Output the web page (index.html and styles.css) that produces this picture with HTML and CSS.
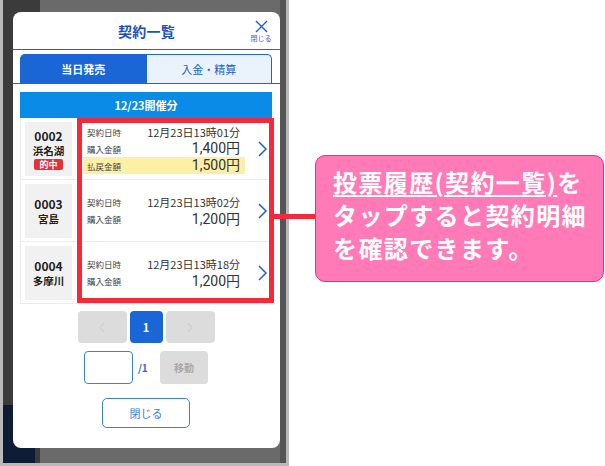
FILE: index.html
```html
<!DOCTYPE html>
<html lang="ja">
<head>
<meta charset="utf-8">
<title>契約一覧</title>
<link rel="stylesheet" href="styles.css">
</head>
<body>
<div class="stage">
  <div class="phone">
    <div class="modal">
      <header class="modal-head">
        <span class="head-spacer"></span>
        <h1 class="modal-title">契約一覧</h1>
        <div class="head-close">
          <svg class="x-icon" width="13" height="13" viewBox="0 0 13 13"><path d="M1 1L12 12M12 1L1 12" stroke="#1a5fd0" stroke-width="1.4" fill="none"/></svg>
          <span class="head-close-label">閉じる</span>
        </div>
      </header>
      <div class="tabs">
        <div class="tab tab-active">当日発売</div>
        <div class="tab tab-idle">入金・精算</div>
      </div>
      <div class="modal-body">
        <div class="date-bar">12/23開催分</div>
        <div class="list">
          <div class="row">
            <div class="venue">
              <div class="venue-num">0002</div>
              <div class="venue-name">浜名湖</div>
              <span class="badge">的中</span>
            </div>
            <div class="detail">
              <div class="line"><span class="lbl">契約日時</span><span class="val-date">12月23日13時01分</span></div>
              <div class="line"><span class="lbl">購入金額</span><span class="val-amt">1,400円</span></div>
              <div class="line line-hit"><span class="lbl">払戻金額</span><span class="val-amt">1,500円</span></div>
            </div>
            <div class="chev"><svg width="9" height="16" viewBox="0 0 9 16"><path d="M1 1L8 8L1 15" stroke="#1a5fd0" stroke-width="1.5" fill="none"/></svg></div>
          </div>
          <div class="row">
            <div class="venue">
              <div class="venue-num">0003</div>
              <div class="venue-name">宮島</div>
            </div>
            <div class="detail">
              <div class="line"><span class="lbl">契約日時</span><span class="val-date">12月23日13時02分</span></div>
              <div class="line"><span class="lbl">購入金額</span><span class="val-amt">1,200円</span></div>
            </div>
            <div class="chev"><svg width="9" height="16" viewBox="0 0 9 16"><path d="M1 1L8 8L1 15" stroke="#1a5fd0" stroke-width="1.5" fill="none"/></svg></div>
          </div>
          <div class="row">
            <div class="venue">
              <div class="venue-num">0004</div>
              <div class="venue-name">多摩川</div>
            </div>
            <div class="detail">
              <div class="line"><span class="lbl">契約日時</span><span class="val-date">12月23日13時18分</span></div>
              <div class="line"><span class="lbl">購入金額</span><span class="val-amt">1,200円</span></div>
            </div>
            <div class="chev"><svg width="9" height="16" viewBox="0 0 9 16"><path d="M1 1L8 8L1 15" stroke="#1a5fd0" stroke-width="1.5" fill="none"/></svg></div>
          </div>
          <div class="highlight"></div>
        </div>
        <div class="pager">
          <div class="pg pg-nav"><svg width="6" height="11" viewBox="0 0 6 11"><path d="M5 1L1 5.5L5 10" stroke="#c9c9c9" stroke-width="1" fill="none"/></svg></div>
          <div class="pg pg-current">1</div>
          <div class="pg pg-nav"><svg width="6" height="11" viewBox="0 0 6 11"><path d="M1 1L5 5.5L1 10" stroke="#c9c9c9" stroke-width="1" fill="none"/></svg></div>
        </div>
        <div class="jump">
          <div class="jump-input"></div>
          <span class="jump-total">/1</span>
          <div class="jump-btn">移動</div>
        </div>
        <div class="close-btn">閉じる</div>
      </div>
    </div>
  </div>
  <div class="callout">
    <p class="callout-text"><span class="callout-u">投票履歴(契約一覧)</span>を<br>タップすると契約明細<br>を確認できます。</p>
  </div>
</div>
</body>
</html>
```

FILE: styles.css
```css
* { box-sizing: border-box; }
html, body { margin: 0; padding: 0; }
body {
  width: 605px;
  height: 466px;
  overflow: hidden;
  background: #ffffff;
  font-family: "Noto Sans CJK JP", "Noto Sans", sans-serif;
  color: #333;
}
.stage {
  display: flex;
  align-items: flex-start;
  height: 466px;
}
.phone {
  width: 289px;
  height: 466px;
  flex: none;
  border: 3px solid #b9b9b9;
  border-top: 0;
  padding: 12px 6px 0 10px;
  background:
    linear-gradient(#0e1c36, #0e1c36) left bottom / 32px 58px no-repeat,
    linear-gradient(to right, #3b3b3b 0, #3b3b3b 37px, #6a6a6a 37px, #6a6a6a 277px, #555 277px);
}
.modal {
  background: #fff;
  border-radius: 8px;
  height: 436px;
  display: flex;
  flex-direction: column;
  overflow: hidden;
}
.modal-head {
  height: 38px;
  flex: none;
  display: grid;
  grid-template-columns: 1fr auto 1fr;
  align-items: center;
  border-bottom: 1px solid #1a66d6;
}
.modal-title {
  margin: 0;
  font-size: 14px;
  font-weight: 700;
  color: #1a4fbf;
  letter-spacing: 0.3px;
  padding-top: 1px;
}
.head-close {
  justify-self: end;
  margin-right: 7px;
  width: 24px;
  display: flex;
  flex-direction: column;
  align-items: center;
  padding-top: 2px;
}
.x-icon { display: block; }
.head-close-label {
  font-size: 7px;
  line-height: 9px;
  color: #2f6ad6;
  margin-top: 1px;
  white-space: nowrap;
}
.tabs {
  flex: none;
  display: flex;
  padding: 4px 8px 0 7px;
  border-bottom: 1px solid #1a66d6;
}
.tab {
  flex: 1;
  height: 29px;
  display: flex;
  align-items: center;
  justify-content: center;
  font-size: 11px;
  font-weight: 700;
  border: 1px solid #1a66d6;
  border-bottom: 0;
}
.tab-active {
  background: #1a66d6;
  color: #fff;
  border-radius: 5px 0 0 0;
}
.tab-idle {
  background: #eaf2fc;
  color: #1a5fd0;
  font-weight: 400;
  border-radius: 0 5px 0 0;
  border-left: 0;
}
.modal-body {
  flex: 1;
  padding: 8px 8px 0 7px;
  display: flex;
  flex-direction: column;
  align-items: center;
}
.date-bar {
  align-self: stretch;
  height: 26px;
  background: #0a8be8;
  color: #fff;
  font-size: 11px;
  font-weight: 700;
  display: flex;
  align-items: center;
  justify-content: center;
}
.list {
  align-self: stretch;
  position: relative;
  border: 1px solid #ebebeb;
  border-top: 0;
}
.row {
  height: 61px;
  display: flex;
  align-items: center;
}
.row + .row { border-top: 1px solid #ececec; height: 62px; }
.venue {
  align-self: stretch;
  width: 47px;
  margin: 4px 0 3px 4px;
  background: #f1f1f1;
  display: flex;
  flex-direction: column;
  align-items: center;
  justify-content: center;
  color: #222;
  font-weight: 700;
}
.venue-num { font-size: 12px; line-height: 15px; }
.venue-name { font-size: 10.5px; line-height: 15px; }
.badge {
  background: #e3323b;
  color: #fff;
  font-size: 9px;
  line-height: 11px;
  padding: 0 5px;
  border-radius: 2px;
  margin-top: 1px;
}
.detail {
  width: 162px;
  margin-left: 11px;
}
.line {
  height: 17px;
  display: flex;
  align-items: center;
  justify-content: space-between;
  padding: 0 5px 0 4px;
}
.line-hit { background: #fdf0a6; }
.lbl { display: block; font-size: 8.5px; line-height: 12px; color: #444; }
.val-date { display: block; font-size: 11px; line-height: 14px; color: #333; }
.val-amt {
  display: block;
  font-family: Roboto, "Noto Sans CJK JP", sans-serif;
  font-size: 14px;
  line-height: 17px;
  color: #333;
}
.chev {
  flex: 1;
  display: flex;
  justify-content: center;
  padding-left: 8px;
}
.chev svg { display: block; }
.highlight {
  position: absolute;
  left: 56px;
  top: 0;
  width: 197px;
  height: 185px;
  border: 5px solid #f42a3a;
  pointer-events: none;
}
.pager {
  display: flex;
  gap: 3px;
  margin-top: 7px;
  height: 32px;
}
.pg {
  height: 32px;
  border-radius: 4px;
  display: flex;
  align-items: center;
  justify-content: center;
}
.pg-nav { width: 49px; background: #dcdcdc; }
.pg-current {
  width: 33px;
  background: #1a66d6;
  color: #fff;
  font-weight: 700;
  font-size: 11px;
}
.jump {
  display: flex;
  align-items: center;
  margin-top: 8px;
  height: 33px;
}
.jump-input {
  width: 49px;
  height: 33px;
  border: 1px solid #3a7fe0;
  border-radius: 4px;
  background: #fff;
}
.jump-total {
  width: 27px;
  padding-left: 5px;
  font-size: 10px;
  font-weight: 700;
  color: #2f6ad6;
}
.jump-btn {
  width: 48px;
  height: 33px;
  background: #dcdcdc;
  border-radius: 4px;
  color: #a8a8a8;
  font-size: 10px;
  font-weight: 700;
  display: flex;
  align-items: center;
  justify-content: center;
}
.close-btn {
  margin-top: 14px;
  width: 88px;
  height: 30px;
  border: 1.5px solid #3a7fe0;
  border-radius: 5px;
  color: #3a7fe0;
  font-size: 11px;
  display: flex;
  align-items: center;
  justify-content: center;
}
.callout {
  position: relative;
  margin: 155px 0 0 26px;
  width: 289px;
  height: 127px;
  background: #ff7ab6;
  border: 1px solid #d8338b;
  border-radius: 10px;
  padding: 9px 0 0 17px;
}
.callout::before {
  content: "";
  position: absolute;
  left: -43px;
  top: 58px;
  width: 42px;
  height: 5px;
  background: #f42a3a;
}
.callout-text {
  margin: 0;
  color: #fff;
  font-size: 24px;
  line-height: 33px;
  font-weight: 700;
  letter-spacing: 1.4px;
  white-space: nowrap;
}
.callout-u {
  text-decoration: underline;
  text-decoration-thickness: 1.5px;
  text-underline-offset: 3px;
}
```
